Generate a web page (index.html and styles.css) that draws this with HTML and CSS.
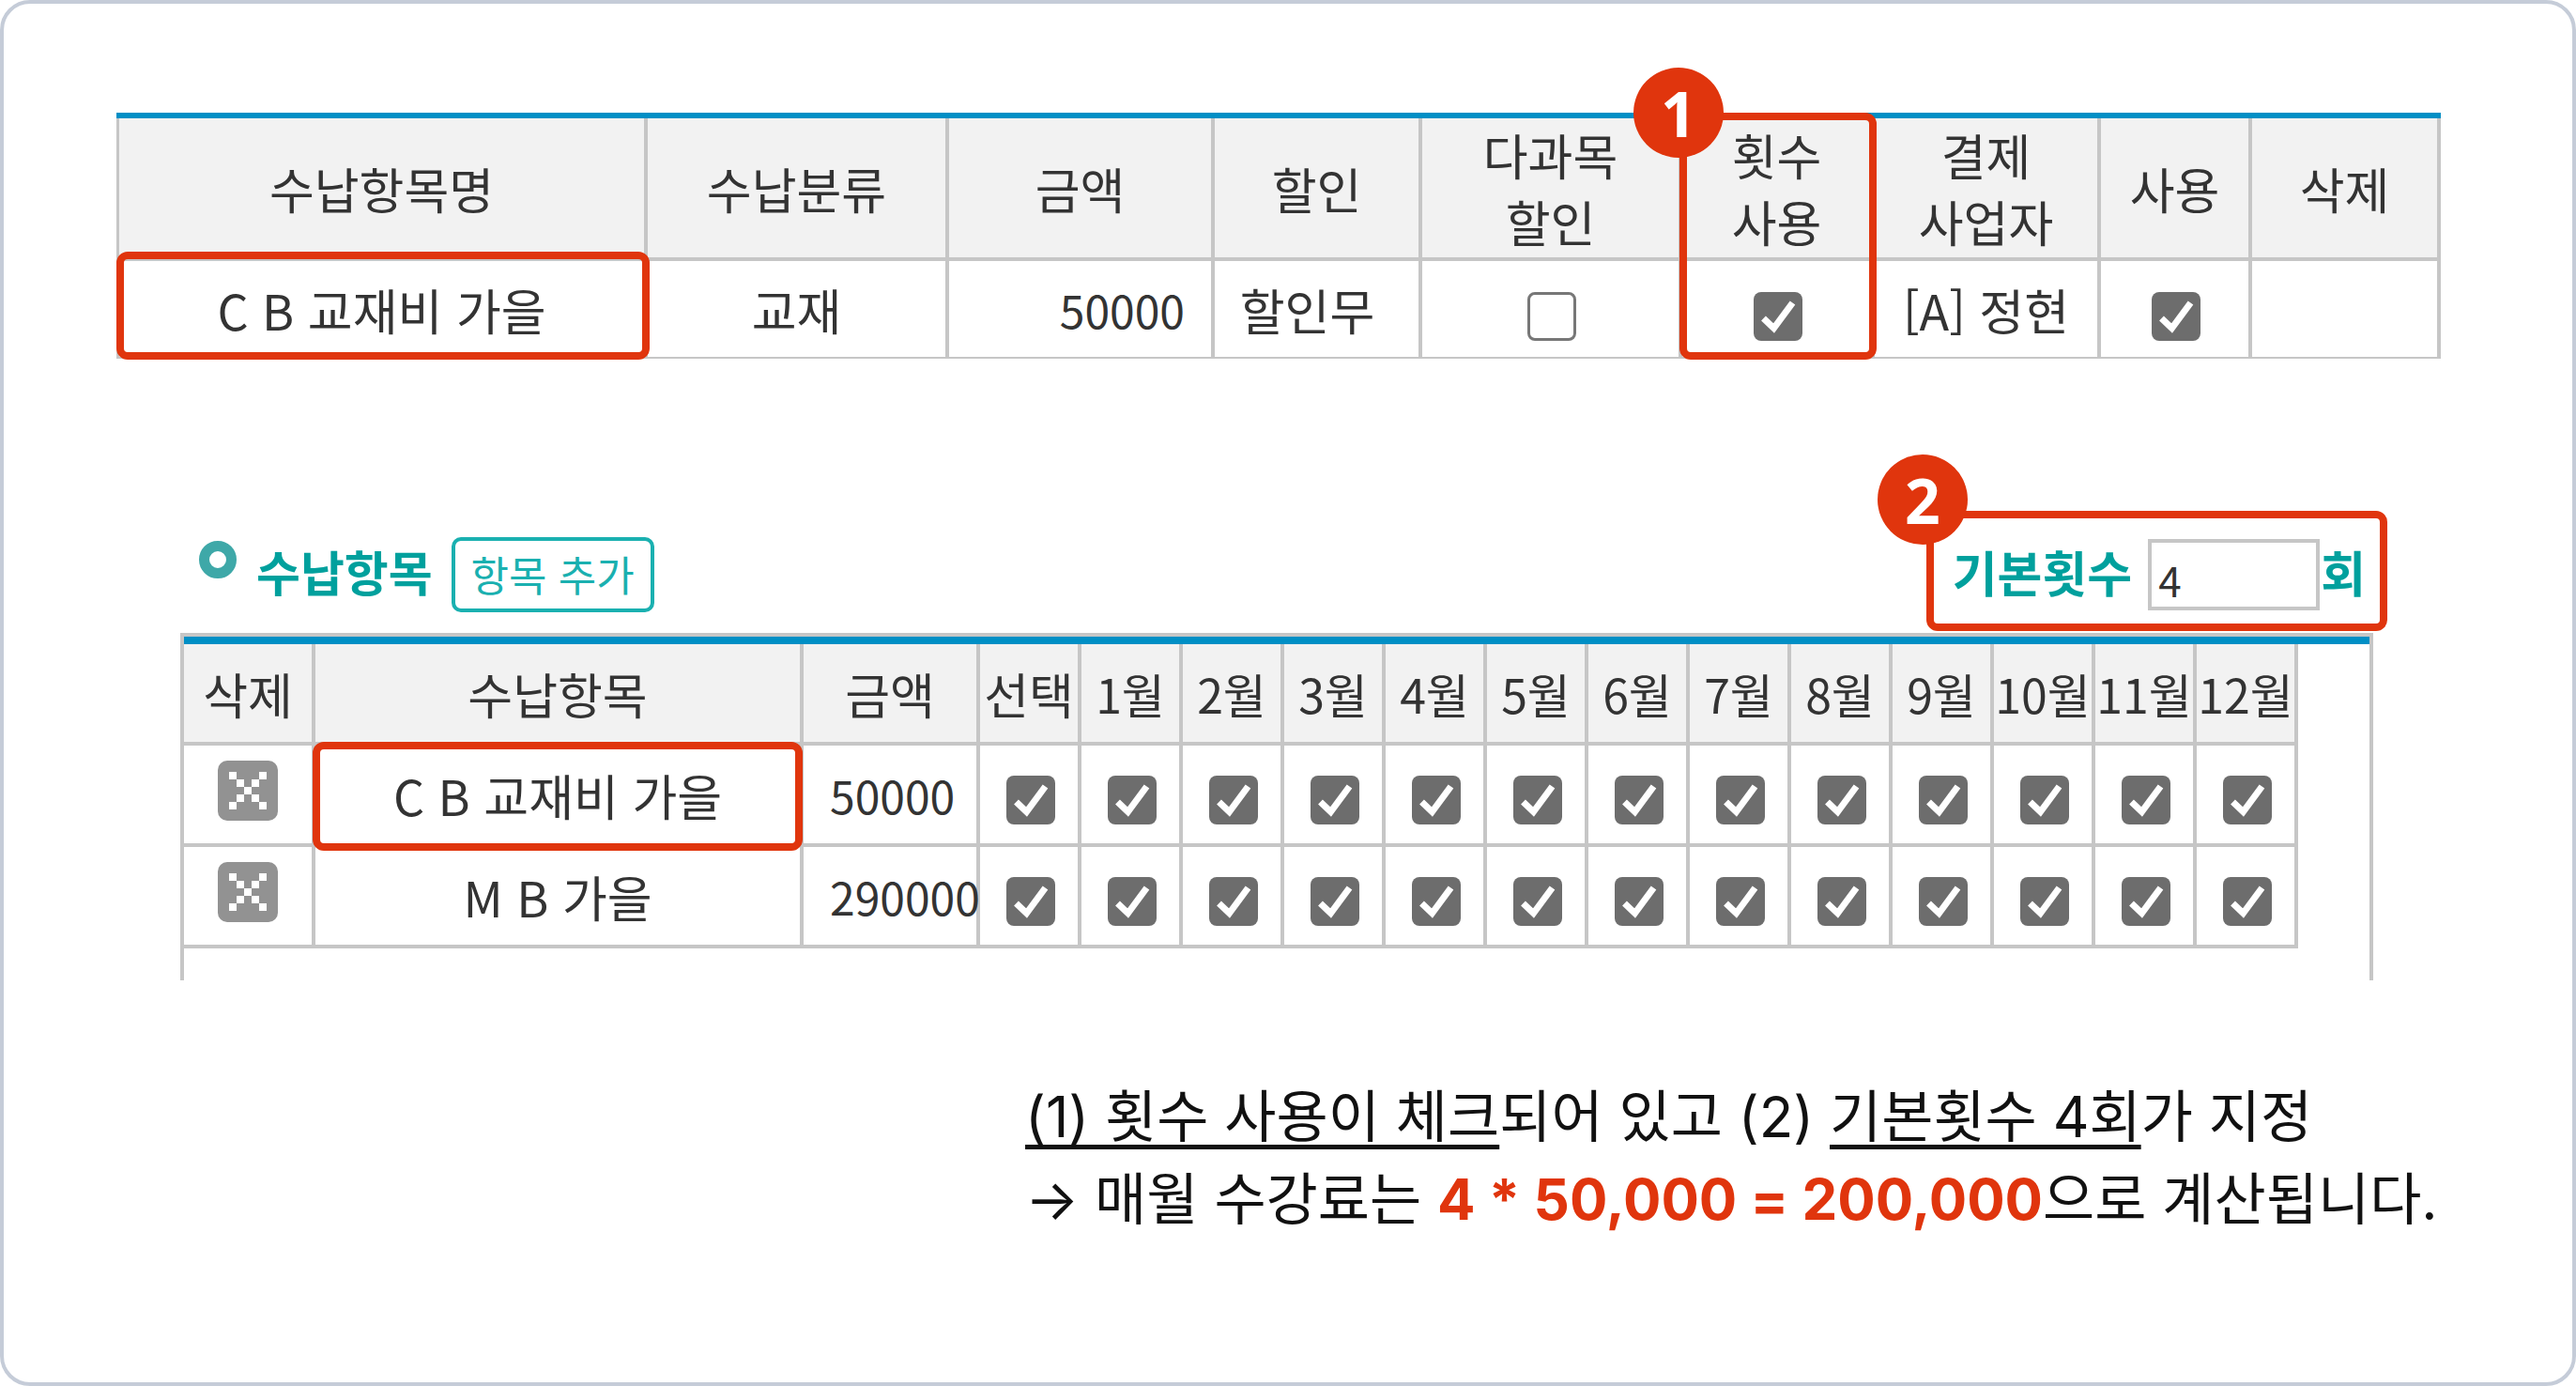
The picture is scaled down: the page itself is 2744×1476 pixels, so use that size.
FILE: index.html
```html
<!DOCTYPE html>
<html lang="ko">

<head>
    <meta charset="UTF-8">
    <title>수납항목 횟수 사용</title>
    <link rel="stylesheet" href="styles.css">
</head>

<body>
    <svg class="defs" width="0" height="0">
        <symbol id="checked" viewBox="0 0 52 52">
            <rect width="52" height="52" rx="8" fill="#6d6d6d" />
            <path d="M10.5 28 L21.5 38.5 L41.5 11.5" fill="none" stroke="#fff" stroke-width="7" />
        </symbol>
        <symbol id="remove" viewBox="0 0 64 64">
            <rect width="64" height="64" rx="10" fill="#929292" />
            <g fill="#fff">
                <rect x="12" y="12" width="8" height="8" />
                <rect x="44" y="12" width="8" height="8" />
                <rect x="20" y="20" width="8" height="8" />
                <rect x="36" y="20" width="8" height="8" />
                <rect x="28" y="28" width="8" height="8" />
                <rect x="20" y="36" width="8" height="8" />
                <rect x="36" y="36" width="8" height="8" />
                <rect x="12" y="44" width="8" height="8" />
                <rect x="44" y="44" width="8" height="8" />
            </g>
        </symbol>
    </svg>

    <div class="frame">
        <div class="fee-wrap">
            <table class="grid fee-table">
                <colgroup>
                    <col class="fc1"><col class="fc2"><col class="fc3"><col class="fc4"><col class="fc5">
                    <col class="fc6"><col class="fc7"><col class="fc8"><col class="fc9">
                </colgroup>
                <thead>
                    <tr>
                        <th>수납항목명</th>
                        <th>수납분류</th>
                        <th>금액</th>
                        <th>할인</th>
                        <th>다과목<br>할인</th>
                        <th>횟수<br>사용</th>
                        <th>결제<br>사업자</th>
                        <th>사용</th>
                        <th>삭제</th>
                    </tr>
                </thead>
                <tbody>
                    <tr>
                        <td>C B 교재비 가을</td>
                        <td>교재</td>
                        <td class="amount">50000</td>
                        <td class="discount">할인무</td>
                        <td><span class="checkbox empty"></span></td>
                        <td><svg class="checkbox"><use href="#checked" /></svg></td>
                        <td>[A] 정현</td>
                        <td><svg class="checkbox"><use href="#checked" /></svg></td>
                        <td></td>
                    </tr>
                </tbody>
            </table>
            <div class="mark mark-name"></div>
            <div class="mark mark-use"></div>
            <div class="badge badge-one">1</div>
        </div>

        <div class="section-head">
            <span class="dot"></span>
            <h2 class="section-title">수납항목</h2>
            <button class="add-btn">항목 추가</button>
            <div class="base-count">
                <label>기본횟수</label>
                <input class="count-input" value="4">
                <label>회</label>
            </div>
            <div class="mark mark-count"></div>
            <div class="badge badge-two">2</div>
        </div>

        <div class="item-panel">
            <table class="grid item-table">
                <colgroup>
                    <col class="ic1"><col class="ic2"><col class="ic3">
                    <col class="im" span="13">
                </colgroup>
                <thead>
                    <tr>
                        <th>삭제</th>
                        <th>수납항목</th>
                        <th>금액</th>
                        <th>선택</th>
                        <th class="month">1월</th>
                        <th class="month">2월</th>
                        <th class="month">3월</th>
                        <th class="month">4월</th>
                        <th class="month">5월</th>
                        <th class="month">6월</th>
                        <th class="month">7월</th>
                        <th class="month">8월</th>
                        <th class="month">9월</th>
                        <th class="month">10월</th>
                        <th class="month">11월</th>
                        <th class="month">12월</th>
                    </tr>
                </thead>
                <tbody>
                    <tr>
                        <td><svg class="remove"><use href="#remove" /></svg></td>
                        <td>C B 교재비 가을</td>
                        <td class="price">50000</td>
                        <td><svg class="checkbox"><use href="#checked" /></svg></td>
                        <td><svg class="checkbox"><use href="#checked" /></svg></td>
                        <td><svg class="checkbox"><use href="#checked" /></svg></td>
                        <td><svg class="checkbox"><use href="#checked" /></svg></td>
                        <td><svg class="checkbox"><use href="#checked" /></svg></td>
                        <td><svg class="checkbox"><use href="#checked" /></svg></td>
                        <td><svg class="checkbox"><use href="#checked" /></svg></td>
                        <td><svg class="checkbox"><use href="#checked" /></svg></td>
                        <td><svg class="checkbox"><use href="#checked" /></svg></td>
                        <td><svg class="checkbox"><use href="#checked" /></svg></td>
                        <td><svg class="checkbox"><use href="#checked" /></svg></td>
                        <td><svg class="checkbox"><use href="#checked" /></svg></td>
                        <td><svg class="checkbox"><use href="#checked" /></svg></td>
                    </tr>
                    <tr>
                        <td><svg class="remove"><use href="#remove" /></svg></td>
                        <td>M B 가을</td>
                        <td class="price">290000</td>
                        <td><svg class="checkbox"><use href="#checked" /></svg></td>
                        <td><svg class="checkbox"><use href="#checked" /></svg></td>
                        <td><svg class="checkbox"><use href="#checked" /></svg></td>
                        <td><svg class="checkbox"><use href="#checked" /></svg></td>
                        <td><svg class="checkbox"><use href="#checked" /></svg></td>
                        <td><svg class="checkbox"><use href="#checked" /></svg></td>
                        <td><svg class="checkbox"><use href="#checked" /></svg></td>
                        <td><svg class="checkbox"><use href="#checked" /></svg></td>
                        <td><svg class="checkbox"><use href="#checked" /></svg></td>
                        <td><svg class="checkbox"><use href="#checked" /></svg></td>
                        <td><svg class="checkbox"><use href="#checked" /></svg></td>
                        <td><svg class="checkbox"><use href="#checked" /></svg></td>
                        <td><svg class="checkbox"><use href="#checked" /></svg></td>
                    </tr>
                </tbody>
            </table>
            <div class="mark mark-item"></div>
        </div>

        <div class="note">
            <p><u>(1) 횟수 사용이 체크</u>되어 있고 (2) <u>기본횟수 4회</u>가 지정</p>
            <p>→ 매월 수강료는 <strong>4 * 50,000 = 200,000</strong>으로 계산됩니다.</p>
        </div>
    </div>
</body>

</html>
```

FILE: styles.css
```css
* {
    box-sizing: border-box;
}

body {
    margin: 0;
    background: #fff;
    font-family: "Noto Sans CJK KR", sans-serif;
    color: #333;
}

.defs {
    position: absolute;
}

.frame {
    position: relative;
    height: 1476px;
    padding-top: 116px;
    border: 4px solid #c5ccd8;
    border-radius: 32px;
    overflow: hidden;
}

/* tables */
.grid {
    table-layout: fixed;
    border-collapse: separate;
    border-spacing: 0;
    font-size: 52px;
}

.grid th,
.grid td {
    padding: 0;
    border-right: 4px solid #c6c6c6;
    border-bottom: 4px solid #c6c6c6;
    text-align: center;
    white-space: nowrap;
    font-weight: 400;
}

.grid th {
    background: #f2f2f2;
    line-height: 71px;
}

.grid th.month {
    font-size: 50px;
}

/* top table */
.fee-wrap {
    position: relative;
    width: 2476px;
    margin-left: 120px;
    border-top: 6px solid #008fc5;
}

.fee-table {
    width: 2476px;
}

.fee-table th:first-child,
.fee-table td:first-child {
    border-left: 3px solid #c6c6c6;
}

.fee-table thead tr {
    height: 152px;
}

.fee-table tbody tr {
    height: 104px;
}

.fee-table td {
    border-bottom-width: 2px;
}

.fc1 { width: 566px; }
.fc2 { width: 321px; }
.fc3 { width: 283px; }
.fc4 { width: 221px; }
.fc5 { width: 277px; }
.fc6 { width: 205px; }
.fc7 { width: 241px; }
.fc8 { width: 161px; }
.fc9 { width: 201px; }

.grid .amount {
    padding-right: 28px;
    text-align: right;
    font-size: 48px;
}

.grid .discount {
    padding-right: 20px;
}

.checkbox {
    display: inline-block;
    width: 52px;
    height: 52px;
    margin-left: 2px;
    vertical-align: middle;
}

.checkbox.empty {
    border: 3px solid #777;
    border-radius: 8px;
}

/* section heading */
.section-head {
    position: relative;
    display: flex;
    align-items: center;
    width: 2336px;
    height: 80px;
    margin: 190px 0 22px 188px;
    padding: 0 8px 0 20px;
}

.dot {
    align-self: flex-start;
    width: 40px;
    height: 40px;
    margin: 4px 21px 0 0;
    border: 11px solid #3ea8a8;
    border-radius: 50%;
}

.section-title {
    margin: 0 20px 8px 0;
    font-size: 51px;
    font-weight: 700;
    color: #00a09d;
}

.add-btn {
    width: 216px;
    height: 80px;
    padding: 0 0 2px;
    border: 4px solid #1ab0b0;
    border-radius: 10px;
    background: #fff;
    font-family: inherit;
    font-size: 44px;
    color: #1ab0b0;
}

.base-count {
    display: flex;
    align-items: center;
    gap: 1px;
    margin-left: auto;
    font-size: 52px;
    font-weight: 700;
    color: #00a09d;
}

.base-count label {
    padding-bottom: 8px;
}

.base-count label:first-child {
    margin-right: 16px;
}

.count-input {
    width: 183px;
    height: 76px;
    padding: 10px 0 0 7px;
    border: 4px solid #c6c6c6;
    font-family: inherit;
    font-size: 44px;
    color: #333;
}

/* bottom table */
.item-panel {
    position: relative;
    width: 2336px;
    height: 370px;
    margin-left: 188px;
    border: 4px solid #c6c6c6;
    border-bottom: 0;
}

.item-panel::before {
    content: "";
    display: block;
    height: 8px;
    background: #008fc5;
}

.item-table {
    width: 2252px;
}

.item-table tr {
    height: 108px;
}

.ic1 { width: 140px; }
.ic2 { width: 520px; }
.ic3 { width: 188px; }
.im { width: 108px; }

.grid .price {
    padding-left: 28px;
    text-align: left;
    font-size: 48px;
}

.item-table .checkbox {
    margin: 0 0 5px 4px;
}

.remove {
    display: inline-block;
    width: 64px;
    height: 64px;
    margin-bottom: 15px;
    vertical-align: middle;
}

/* red highlights */
.mark {
    position: absolute;
    border: 8px solid #e0350d;
    border-radius: 12px;
}

.mark-name {
    left: 0;
    top: 142px;
    width: 568px;
    height: 115px;
}

.mark-use {
    left: 1665px;
    top: -6px;
    width: 210px;
    height: 263px;
}

.mark-count {
    left: 1860px;
    top: -28px;
    width: 491px;
    height: 128px;
}

.mark-item {
    left: 137px;
    top: 112px;
    width: 522px;
    height: 116px;
}

.badge {
    position: absolute;
    width: 96px;
    height: 96px;
    border-radius: 50%;
    background: #e0350d;
    color: #fff;
    font-family: "Noto Sans", sans-serif;
    font-size: 66px;
    font-weight: 700;
    line-height: 96px;
    text-align: center;
}

.badge-one {
    left: 1616px;
    top: -54px;
}

.badge-two {
    left: 1808px;
    top: -88px;
}

/* note */
.note {
    margin: 101px 0 0 1088px;
    font-family: Inter, "Noto Sans CJK KR", sans-serif;
    font-size: 60px;
    line-height: 88px;
    color: #111;
    white-space: nowrap;
}

.note p {
    margin: 0;
}

.note u {
    text-decoration-thickness: 5px;
    text-underline-offset: 8px;
}

.note strong {
    font-weight: 700;
    color: #e0350d;
}
```
